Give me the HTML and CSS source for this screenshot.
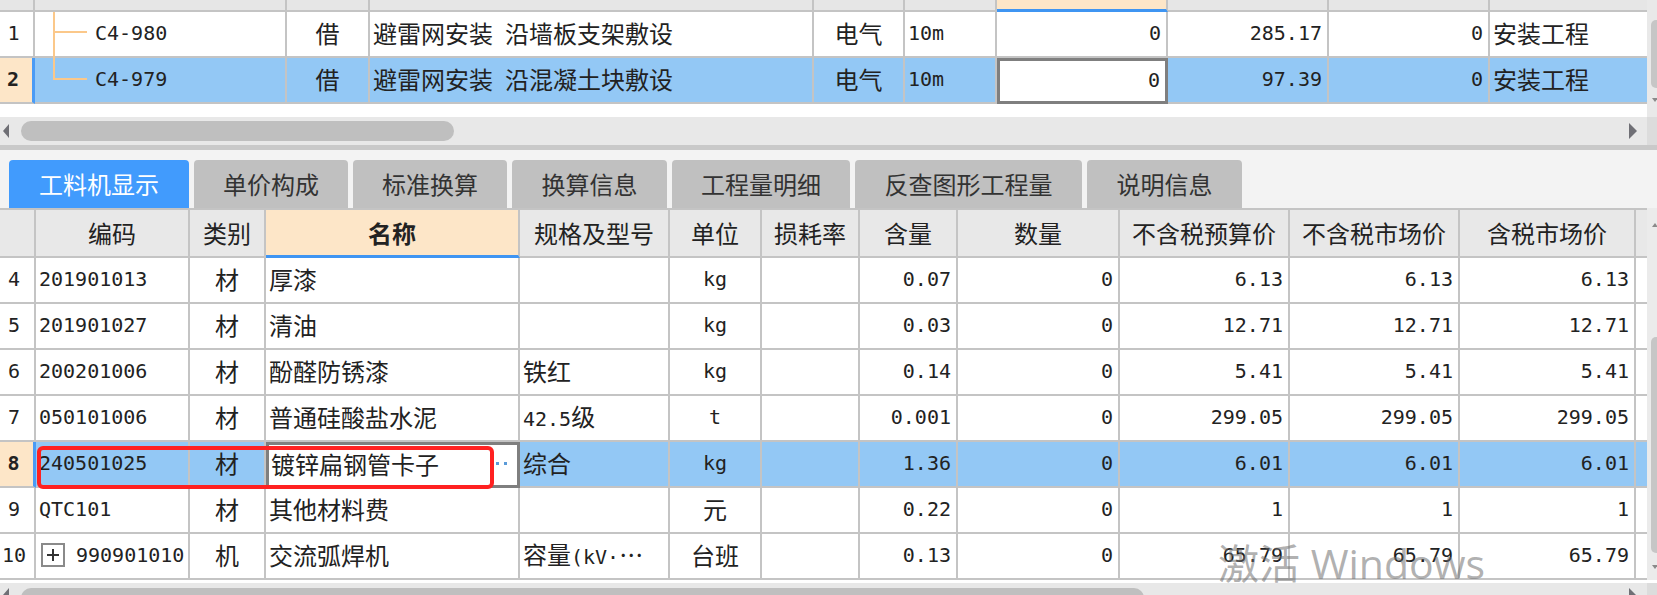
FILE: index.html
```html
<!DOCTYPE html>
<html lang="zh-CN">
<head>
<meta charset="utf-8">
<title>工料机显示</title>
<link rel="stylesheet" href="styles.css">
</head>
<body>
<div class="screen">
  <section class="upper">
    <div class="upper-main">
      <div class="grid top-grid">
        <div class="row">
          <div class="cell strip"></div><div class="cell strip"></div><div class="cell strip"></div><div class="cell strip"></div><div class="cell strip"></div><div class="cell strip"></div><div class="cell strip peach"></div><div class="cell strip"></div><div class="cell strip"></div><div class="cell strip last"></div>
        </div>
        <div class="row">
          <div class="cell rn n">1</div>
          <div class="cell tree"><span class="tv tv-full"></span><span class="th-line"></span><span class="n">C4-980</span></div>
          <div class="cell c">借</div>
          <div class="cell">避雷网安装&ensp;沿墙板支架敷设</div>
          <div class="cell c">电气</div>
          <div class="cell n">10m</div>
          <div class="cell r n">0</div>
          <div class="cell r n">285.17</div>
          <div class="cell r n">0</div>
          <div class="cell last">安装工程</div>
        </div>
        <div class="row sel">
          <div class="cell rn n cur">2</div>
          <div class="cell tree"><span class="tv tv-end"></span><span class="th-line"></span><span class="n">C4-979</span></div>
          <div class="cell c">借</div>
          <div class="cell">避雷网安装&ensp;沿混凝土块敷设</div>
          <div class="cell c">电气</div>
          <div class="cell n">10m</div>
          <div class="cell r n active">0</div>
          <div class="cell r n">97.39</div>
          <div class="cell r n">0</div>
          <div class="cell last">安装工程</div>
        </div>
      </div>
      <div class="blank"></div>
    </div>
    <div class="vbar vbar-top">
      <div class="vthumb vthumb-top"></div>
      <div class="arr-down"></div>
    </div>
  </section>

  <div class="hbar hbar-top">
    <div class="arr-left"></div>
    <div class="hthumb hthumb-top"></div>
    <div class="spacer"></div>
    <div class="arr-right"></div>
    <div class="corner"></div>
  </div>
  <div class="divider"></div>

  <nav class="tabs">
    <div class="tab on w180">工料机显示</div>
    <div class="tab w154">单价构成</div>
    <div class="tab w154">标准换算</div>
    <div class="tab w155">换算信息</div>
    <div class="tab w178">工程量明细</div>
    <div class="tab w227">反查图形工程量</div>
    <div class="tab w155">说明信息</div>
  </nav>

  <section class="lower">
    <div class="grid low-grid">
      <div class="row head">
        <div class="cell hd"></div>
        <div class="cell hd">编码</div>
        <div class="cell hd">类别</div>
        <div class="cell hd hd-name">名称</div>
        <div class="cell hd">规格及型号</div>
        <div class="cell hd">单位</div>
        <div class="cell hd">损耗率</div>
        <div class="cell hd">含量</div>
        <div class="cell hd">数量</div>
        <div class="cell hd">不含税预算价</div>
        <div class="cell hd">不含税市场价</div>
        <div class="cell hd">含税市场价</div>
        <div class="cell hd last"></div>
      </div>
      <div class="row">
        <div class="cell rn n">4</div>
        <div class="cell n">201901013</div>
        <div class="cell c">材</div>
        <div class="cell">厚漆</div>
        <div class="cell"></div>
        <div class="cell c n">kg</div>
        <div class="cell"></div>
        <div class="cell r n">0.07</div>
        <div class="cell r n">0</div>
        <div class="cell r n">6.13</div>
        <div class="cell r n">6.13</div>
        <div class="cell r n">6.13</div>
        <div class="cell last"></div>
      </div>
      <div class="row">
        <div class="cell rn n">5</div>
        <div class="cell n">201901027</div>
        <div class="cell c">材</div>
        <div class="cell">清油</div>
        <div class="cell"></div>
        <div class="cell c n">kg</div>
        <div class="cell"></div>
        <div class="cell r n">0.03</div>
        <div class="cell r n">0</div>
        <div class="cell r n">12.71</div>
        <div class="cell r n">12.71</div>
        <div class="cell r n">12.71</div>
        <div class="cell last"></div>
      </div>
      <div class="row">
        <div class="cell rn n">6</div>
        <div class="cell n">200201006</div>
        <div class="cell c">材</div>
        <div class="cell">酚醛防锈漆</div>
        <div class="cell">铁红</div>
        <div class="cell c n">kg</div>
        <div class="cell"></div>
        <div class="cell r n">0.14</div>
        <div class="cell r n">0</div>
        <div class="cell r n">5.41</div>
        <div class="cell r n">5.41</div>
        <div class="cell r n">5.41</div>
        <div class="cell last"></div>
      </div>
      <div class="row">
        <div class="cell rn n">7</div>
        <div class="cell n">050101006</div>
        <div class="cell c">材</div>
        <div class="cell">普通硅酸盐水泥</div>
        <div class="cell"><span><span class="n">42.5</span>级</span></div>
        <div class="cell c n">t</div>
        <div class="cell"></div>
        <div class="cell r n">0.001</div>
        <div class="cell r n">0</div>
        <div class="cell r n">299.05</div>
        <div class="cell r n">299.05</div>
        <div class="cell r n">299.05</div>
        <div class="cell last"></div>
      </div>
      <div class="row sel">
        <div class="cell rn n cur">8</div>
        <div class="cell n">240501025</div>
        <div class="cell c">材</div>
        <div class="cell edit"><span>镀锌扁钢管卡子</span><span class="dots"><i></i><i></i></span></div>
        <div class="cell">综合</div>
        <div class="cell c n">kg</div>
        <div class="cell"></div>
        <div class="cell r n">1.36</div>
        <div class="cell r n">0</div>
        <div class="cell r n">6.01</div>
        <div class="cell r n">6.01</div>
        <div class="cell r n">6.01</div>
        <div class="cell last"></div>
      </div>
      <div class="row">
        <div class="cell rn n">9</div>
        <div class="cell n">QTC101</div>
        <div class="cell c">材</div>
        <div class="cell">其他材料费</div>
        <div class="cell"></div>
        <div class="cell c">元</div>
        <div class="cell"></div>
        <div class="cell r n">0.22</div>
        <div class="cell r n">0</div>
        <div class="cell r n">1</div>
        <div class="cell r n">1</div>
        <div class="cell r n">1</div>
        <div class="cell last"></div>
      </div>
      <div class="row">
        <div class="cell rn n">10</div>
        <div class="cell"><span class="plus"></span><span class="n">990901010</span></div>
        <div class="cell c">机</div>
        <div class="cell">交流弧焊机</div>
        <div class="cell"><span>容量<span class="n">(kV·</span>…</span></div>
        <div class="cell c">台班</div>
        <div class="cell"></div>
        <div class="cell r n">0.13</div>
        <div class="cell r n">0</div>
        <div class="cell r n">65.79</div>
        <div class="cell r n">65.79</div>
        <div class="cell r n">65.79</div>
        <div class="cell last"></div>
      </div>
    </div>
    <div class="vbar vbar-low">
      <div class="arr-up"></div>
      <div class="vthumb vthumb-low"></div>
      <div class="arr-down arr-down-low"></div>
    </div>
  </section>

  <div class="hbar-low">
    <div class="track">
      <div class="arr-left arr-left-low"></div>
      <div class="hthumb hthumb-low"></div>
      <div class="spacer"></div>
      <div class="arr-right arr-right-low"></div>
      <div class="corner"></div>
    </div>
  </div>

  <div class="annot"></div>
  <div class="watermark">激活 Windows</div>
</div>
</body>
</html>
```

FILE: styles.css
```css
* { box-sizing: border-box; }
html, body { margin: 0; padding: 0; }
body {
  width: 1657px;
  height: 595px;
  overflow: hidden;
  background: #fff;
  font-family: "Noto Sans CJK SC", sans-serif;
  font-size: 24px;
  color: #222;
}
.screen { position: relative; width: 1657px; height: 595px; overflow: hidden; }

/* ---------- generic grid ---------- */
.grid { display: grid; }
.row { display: contents; }
.cell {
  border-right: 2px solid #c4c4c4;
  border-bottom: 2px solid #c4c4c4;
  display: flex;
  align-items: center;
  white-space: nowrap;
  overflow: hidden;
  padding: 0 3px;
  line-height: 1;
  background: #fff;
}
.cell.last { border-right: none; }
.c { justify-content: center; }
.r { justify-content: flex-end; padding-right: 5px; }
.n { font-family: "DejaVu Sans Mono", "Liberation Mono", monospace; font-size: 20px; }
.rn { justify-content: center; padding: 0 6px 0 0; }
.rn.cur { background: #fde6c8 !important; font-weight: bold; border-right: 3px solid #4a9bf5; }
.sel > .cell { background: #93c8f5; }

/* ---------- upper table ---------- */
.upper { display: flex; height: 117px; }
.upper-main { width: 1647px; display: flex; flex-direction: column; }
.top-grid {
  grid-template-columns: 35px 252px 83px 444px 91px 92px 171px 161px 161px 157px;
  grid-template-rows: 12px 46px 46px;
}
.top-grid .cell:not(.strip) { padding-bottom: 3px; }
.top-grid .r { padding-bottom: 3px; }
.strip { background: #e6e6e6; }
.strip.peach { background: #fde6c8; border-bottom: 3px solid #3f95f2; }
.blank { flex: 1; background: #fff; }

.tree { position: relative; overflow: visible; padding-left: 60px; }
.tv { position: absolute; left: 18px; top: 0; width: 2px; background: #fbc88a; }
.tv-full { bottom: -2px; }
.tv-end { height: 22px; }
.th-line { position: absolute; left: 18px; width: 34px; height: 2px; background: #fbc88a; }
.row:not(.sel) .th-line { top: 19px; }
.sel .th-line { top: 20px; }

.active {
  background: #fff !important;
  border: 3px solid #7f7f7f;
}

/* ---------- scrollbars ---------- */
.vbar { width: 10px; background: #e9e9e9; display: flex; flex-direction: column; overflow: hidden; }
.vbar-top { height: 117px; padding-top: 20px; }
.vthumb { margin-left: 4px; width: 10px; border-radius: 5px; background: #c6c6c6; flex: none; }
.vthumb-top { height: 68px; }
.arr-down {
  margin-left: 5px; margin-top: 10px; width: 0; height: 0;
  border-left: 3px solid transparent; border-right: 3px solid transparent;
  border-top: 4px solid #8a8a8a; flex: none;
}
.arr-up {
  margin-left: 5px; width: 0; height: 0;
  border-left: 3px solid transparent; border-right: 3px solid transparent;
  border-bottom: 4px solid #8a8a8a; flex: none;
}

.hbar { display: flex; align-items: center; background: #e8e8e8; }
.hbar-top { height: 28px; }
.arr-left {
  margin-left: 3px; width: 0; height: 0; flex: none;
  border-top: 7px solid transparent; border-bottom: 7px solid transparent;
  border-right: 6px solid #6f6f75;
}
.arr-right {
  width: 0; height: 0; flex: none;
  border-top: 8px solid transparent; border-bottom: 8px solid transparent;
  border-left: 8px solid #6f6f75;
  margin-right: 10px;
}
.hthumb { flex: none; background: #bfbfbf; border-radius: 10px; }
.hthumb-top { margin-left: 12px; width: 433px; height: 20px; }
.spacer { flex: 1; }
.corner { width: 10px; align-self: stretch; background: #dcdcdc; flex: none; }
.divider { height: 5px; background: #c9c9c9; }

/* ---------- tabs ---------- */
.tabs {
  height: 58px;
  background: #f3f3f3;
  display: flex;
  gap: 5px;
  padding: 10px 0 0 9px;
}
.tab {
  height: 48px;
  border-radius: 4px 4px 0 0;
  background: #c0c0c0;
  color: #333;
  display: flex;
  align-items: center;
  justify-content: center;
  font-size: 24px;
  line-height: 1;
}
.tab.on { background: #419bfd; color: #fff; }
.w180 { width: 180px; }
.w154 { width: 154px; }
.w155 { width: 155px; }
.w178 { width: 178px; }
.w227 { width: 227px; }

/* ---------- lower table ---------- */
.lower { display: flex; height: 372px; }
.low-grid {
  width: 1647px;
  grid-template-columns: 36px 154px 76px 254px 150px 92px 98px 98px 162px 170px 170px 176px 11px;
  grid-template-rows: 50px repeat(7, 46px);
}
.low-grid .cell:not(.hd) { padding-bottom: 3px; }
.low-grid .r { padding-right: 5px; }
.hd {
  background: #e8e8e8;
  border-top: 2px solid #c4c4c4;
  justify-content: center;
}
.hd-name { background: #fde6c8; font-weight: bold; border-bottom: 3px solid #3f95f2; }

.edit {
  background: #fff !important;
  border: 3px solid #7f7f7f;
  justify-content: space-between;
  padding-left: 2px;
}
.dots { display: flex; gap: 5px; margin-right: 7px; }
.dots i { display: block; width: 3px; height: 3px; background: #5b9bd8; }

.plus {
  position: relative;
  width: 24px; height: 24px;
  border: 2px solid #8a8a8a;
  margin: 0 11px 0 2px;
  flex: none;
}
.plus::before, .plus::after { content: ""; position: absolute; background: #333; }
.plus::before { left: 4px; right: 4px; top: 9px; height: 2px; }
.plus::after { top: 4px; bottom: 4px; left: 9px; width: 2px; }

.vbar-low { height: 372px; background: #ebebeb; padding-top: 15px; }
.vthumb-low { margin-top: 110px; height: 216px; }
.arr-down-low { margin-top: 12px; }

.hbar-low { height: 15px; padding-top: 3px; background: #fff; }
.hbar-low .track { height: 12px; background: #e8e8e8; display: flex; overflow: hidden; }
.arr-left-low { margin-top: 5px; }
.hthumb-low { margin: 5px 0 0 12px; width: 1123px; height: 20px; }
.arr-right-low { margin-top: 5px; }

/* ---------- overlays ---------- */
.annot {
  position: absolute;
  left: 37px; top: 446px;
  width: 457px; height: 43px;
  border: 4px solid #ff2121;
  border-radius: 6px;
}
.watermark {
  position: absolute;
  left: 1218px; top: 543px;
  font-family: "Open Sans", "Noto Sans CJK SC", sans-serif;
  font-size: 41px;
  line-height: 41px;
  color: rgba(110, 110, 110, 0.55);
  white-space: nowrap;
}
```
